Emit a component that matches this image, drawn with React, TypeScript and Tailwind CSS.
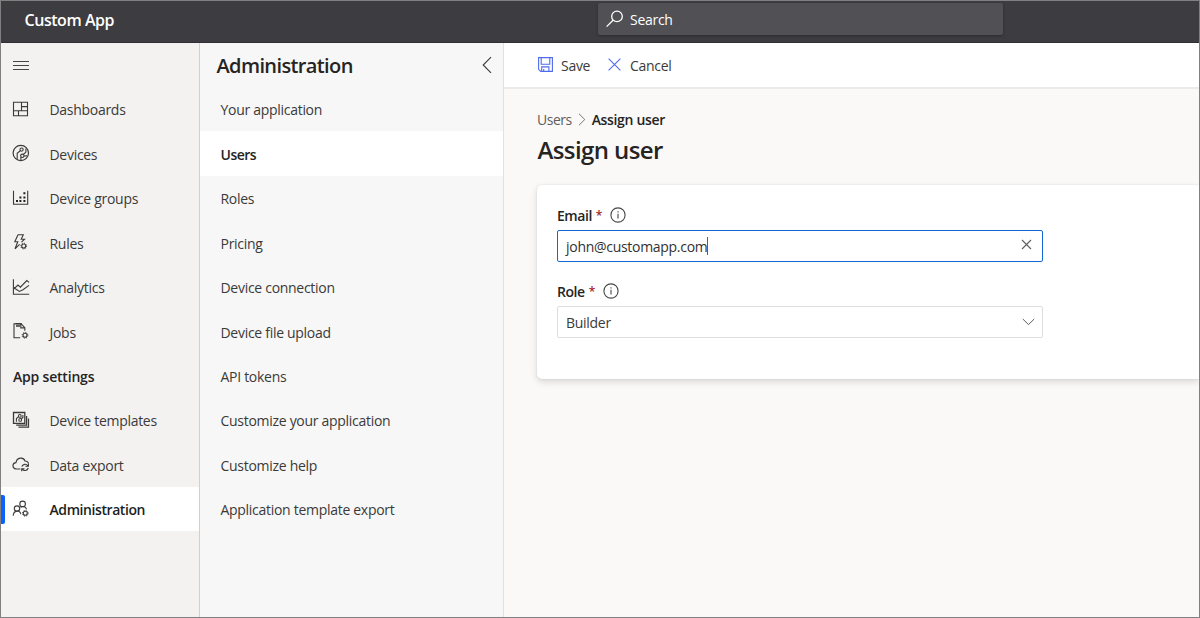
import type { ReactNode } from "react";

type IconProps = { children: ReactNode };

function NavIcon({ children }: IconProps) {
  return (
    <svg width="18" height="18" viewBox="0 0 18 18" fill="none" stroke="#3b3a39" strokeWidth="1.1" className="shrink-0">
      {children}
    </svg>
  );
}

function Gear({ cx, cy }: { cx: number; cy: number }) {
  return (
    <g>
      <circle cx={cx} cy={cy} r="2" strokeWidth="1.1" />
      <circle cx={cx} cy={cy} r="2.9" strokeWidth="1" strokeDasharray="1.1 1.18" />
    </g>
  );
}

const icons = {
  dashboards: (
    <NavIcon>
      <path d="M1.5 2.2h14v13.6h-14zM9.5 2.2v8.6M1.5 10.8h14M9.5 6.6h6M6.5 10.8v5" />
    </NavIcon>
  ),
  devices: (
    <NavIcon>
      <circle cx="8.8" cy="9" r="7.7" strokeWidth="1.2" />
      <circle cx="9.6" cy="5.6" r="1.6" />
      <circle cx="10.3" cy="11.8" r="1.7" />
      <path d="M8.3 6.7 5.2 9.2v6M11.3 10.5l2.6-2.4V4.5M8.9 13v3.2M12 12l3-.1" />
    </NavIcon>
  ),
  groups: (
    <NavIcon>
      <path d="M1.5 1.8v13.4h14.2V1.8" />
      <path d="M4 12h2M7.4 12h2M11.4 12h2M7.4 8.4h2M11.4 8.4h2M11.4 4.2h2" stroke="#201f1e" strokeWidth="2" />
    </NavIcon>
  ),
  rules: (
    <NavIcon>
      <path d="M6 1.8h5.3L9.2 6.3h3.3L9.4 9.2M6 1.8 2.8 8.8h3L3 15.8l4.6-4.5M6 8.8h-.2L4.4 12" />
      <Gear cx={11.7} cy={13} />
    </NavIcon>
  ),
  analytics: (
    <NavIcon>
      <path d="M1.4 1.3v15h15.8M1.6 11.2l4.4-4.2 2.4 2.2 6.4-6.6 2.3 1.8M1.8 9.8l5.6 3.6 3.6-1.6 6-4.4" />
    </NavIcon>
  ),
  jobs: (
    <NavIcon>
      <path d="M8.2 15.8H2V1.8h7.2l3.6 3.8v3.2M8.8 1.8v4.1h4" />
      <path d="M4 4h4M3.5 1.8h6" strokeWidth="1.5" />
      <Gear cx={13} cy={13.3} />
    </NavIcon>
  ),
  templates: (
    <NavIcon>
      <path d="M1.5 1.5h11.3v10.8H1.5z" strokeWidth="1.3" />
      <path d="M14.6 5v9.2H4.2M16.5 7.4v8.7H6.5" strokeWidth="1.2" />
      <circle cx="7.8" cy="4.9" r="1.4" />
      <circle cx="8.2" cy="8.9" r="1.4" />
      <path d="M6.6 5.6 4.4 7.5v3.2M9.2 8l1.7-1.6V4" />
    </NavIcon>
  ),
  exporting: (
    <NavIcon>
      <path d="M8.4 14H4.1C-.1 13.4-.1 8 4 7.6 4.7 2.2 11.6 1.7 13 6c1.5 0 3 .6 3.4 2.2" />
      <path d="M9.8 11.7a3.4 3.4 0 0 1 6-1M16.4 8.3v3h-3M16.2 13a3.4 3.4 0 0 1-6 1.1M9.7 16.3v-2.6h2.8" />
    </NavIcon>
  ),
  admin: (
    <NavIcon>
      <circle cx="10.6" cy="3.9" r="2.8" />
      <circle cx="5" cy="8.6" r="2.7" />
      <path d="M1.2 15.8c.2-6 7.2-6 7.6-1.7M8.5 7.2c2.7-1.4 5.4-.3 6 2.1" />
      <Gear cx={13.3} cy={13.3} />
    </NavIcon>
  ),
};

const mainNav = [
  { label: "Dashboards", icon: icons.dashboards },
  { label: "Devices", icon: icons.devices },
  { label: "Device groups", icon: icons.groups },
  { label: "Rules", icon: icons.rules },
  { label: "Analytics", icon: icons.analytics },
  { label: "Jobs", icon: icons.jobs },
];

const settingsNav = [
  { label: "Device templates", icon: icons.templates },
  { label: "Data export", icon: icons.exporting },
  { label: "Administration", icon: icons.admin, active: true },
];

const adminPages = [
  "Your application",
  "Users",
  "Roles",
  "Pricing",
  "Device connection",
  "Device file upload",
  "API tokens",
  "Customize your application",
  "Customize help",
  "Application template export",
];

function NavItem({ label, icon, active }: { label: string; icon: ReactNode; active?: boolean }) {
  return (
    <a
      className={
        active
          ? "relative flex h-[44.45px] items-center gap-[19.5px] bg-white pl-[11px] font-semibold tracking-[-0.42px] text-[#201f1e]"
          : "flex h-[44.45px] items-center gap-[19.5px] pl-[11px]"
      }
    >
      {active && <span className="absolute top-[8px] left-0 h-[29px] w-1 rounded-r-xs bg-[#0b62fb]" />}
      {icon}
      <span className="pt-[3px]">{label}</span>
    </a>
  );
}

function InfoIcon() {
  return (
    <svg width="16" height="16" viewBox="0 0 16 16" fill="none" stroke="#484644">
      <circle cx="8" cy="8" r="7.1" strokeWidth="1.1" />
      <path d="M8 6.8v4.7M8 4.3v1.2" strokeWidth="1.1" />
    </svg>
  );
}

function FieldLabel({ children }: { children: ReactNode }) {
  return (
    <div className="flex h-4 items-center font-semibold tracking-[-0.45px] text-[#252423]">
      <span className="pt-[2px]">{children}</span>
      <span className="mr-[8px] ml-1 pt-[2px] text-[12px] text-[#a4262c]">*</span>
      <InfoIcon />
    </div>
  );
}

export default function App() {
  return (
    <div className="flex h-[618px] w-[1200px] flex-col overflow-hidden border border-[#808080] bg-white font-['Open_Sans',sans-serif] text-[14px] leading-5 tracking-[-0.29px] whitespace-nowrap text-[#3b3a39]">
      <header className="flex h-[42px] shrink-0 items-start border-b border-[#312f35] bg-[#3d3c41] text-white">
        <h1 className="w-[597px] pt-[9px] pl-[23.5px] text-[16px] font-semibold tracking-[-0.45px]">Custom App</h1>
        <div className="mt-[2px] flex h-8 w-[405px] items-center rounded-xs bg-[#515055] pl-2 shadow-[0_1px_3px_rgba(0,0,0,0.3)]">
          <svg width="18" height="18" viewBox="0 0 18 18" fill="none" stroke="white" strokeWidth="1.3">
            <circle cx="11" cy="6.4" r="5.3" />
            <path d="M7.1 10.3.6 16.6" />
          </svg>
          <span className="pt-px pl-[6px]">Search</span>
        </div>
      </header>

      <div className="flex min-h-0 flex-1">
        <nav className="w-[199px] shrink-0 border-r border-[#d0d0d0] bg-[#f3f2f1]">
          <div className="flex h-[43.7px] items-center pt-[1.5px] pl-3">
            <svg width="17" height="11" viewBox="0 0 17 11" fill="none" stroke="#484644">
              <path d="M0 1.5h16M0 5.5h16M0 9.5h16" />
            </svg>
          </div>
          {mainNav.map((item) => (
            <NavItem key={item.label} {...item} />
          ))}
          <div className="flex h-[44.45px] items-center pt-[2px] pl-3 font-semibold tracking-[-0.2px] text-[#252423]">App settings</div>
          {settingsNav.map((item) => (
            <NavItem key={item.label} {...item} />
          ))}
        </nav>

        <aside className="w-[304px] shrink-0 border-r border-[#e1e1e1] bg-[#f7f7f7]">
          <div className="flex h-[43.7px] items-center justify-between pr-[11px] pl-[16.5px]">
            <h2 className="pt-[2px] text-[20px] font-semibold tracking-[-0.62px] text-[#252423]">Administration</h2>
            <svg width="10" height="18" viewBox="0 0 10 18" fill="none" stroke="#3b3a39" strokeWidth="1.1">
              <path d="M9 1.2 1.2 9 9 16.8" />
            </svg>
          </div>
          {adminPages.map((page) => (
            <a
              key={page}
              className={
                page === "Users"
                  ? "flex h-[44.45px] items-center bg-white pt-[3px] pl-[20.5px] font-semibold tracking-[-0.5px] text-[#252423]"
                  : "flex h-[44.45px] items-center pt-[3px] pl-[20.5px]"
              }
            >
              {page}
            </a>
          ))}
        </aside>

        <main className="min-w-0 flex-1 bg-[#faf9f8]">
          <div className="flex h-[46px] items-center border-b-2 border-[#eaeaea] bg-white pl-[34px]">
            <svg width="15" height="15" viewBox="0 0 15 15" fill="none" stroke="#4f6bed" strokeWidth="1.1" className="mb-px">
              <path d="M.6.6h13.8v13.8H2.7L.6 12.3zM3.2.6v6.7h8.6V.6M3.7 14.4V9.9h7.2v4.5M5.7 14.4v-2.3" />
            </svg>
            <span className="w-[55px] pt-[2px] pl-2">Save</span>
            <svg width="13" height="13" viewBox="0 0 13 13" fill="none" stroke="#4f6bed" strokeWidth="1.1" className="mb-px">
              <path d="m.6.6 11.8 11.8M12.4.6.6 12.4" />
            </svg>
            <span className="pt-[2px] pl-[9px]">Cancel</span>
          </div>

          <div className="flex items-center pt-[21px] pl-[33px]">
            <span className="tracking-[-0.5px] text-[#605e5c]">Users</span>
            <svg width="8" height="13" viewBox="0 0 8 13" fill="none" stroke="#797775" className="mx-[6px] mb-[2px]">
              <path d="m1 .8 5.8 5.7L1 12.2" />
            </svg>
            <span className="font-semibold tracking-[-0.33px] text-[#252423]">Assign user</span>
          </div>
          <h2 className="pt-[4px] pl-[33.5px] text-[24px] leading-8 font-semibold tracking-[-0.6px] text-[#252423]">Assign user</h2>

          <section className="mt-[19px] ml-[33px] h-[194px] rounded-l-[5px] bg-white pt-[22px] pl-5 shadow-[0_3px_7px_rgba(0,0,0,0.13),0_0_2px_rgba(0,0,0,0.11)]">
            <FieldLabel>Email</FieldLabel>
            <div className="mt-[7px] flex h-8 w-[486px] items-center rounded-xs border border-[#1267d2] pr-[10px] pl-2">
              <span className="pt-px text-[#323130]">john@customapp.com</span>
              <span className="h-[18px] w-px bg-[#605e5c]" />
              <svg width="11" height="11" viewBox="0 0 11 11" fill="none" stroke="#605e5c" strokeWidth="1.1" className="mb-[3px] ml-auto">
                <path d="m1 1 9 9M10 1l-9 9" />
              </svg>
            </div>
            <div className="h-[21px]" />
            <FieldLabel>Role</FieldLabel>
            <div className="mt-[7px] flex h-8 w-[486px] items-center justify-between rounded-xs border border-[#dfdfdf] pr-[7px] pl-2">
              <span className="pt-[2px]">Builder</span>
              <svg width="13" height="8" viewBox="0 0 13 8" fill="none" stroke="#605e5c">
                <path d="m.8 1 5.7 5.6L12.2 1" />
              </svg>
            </div>
          </section>
        </main>
      </div>
    </div>
  );
}
